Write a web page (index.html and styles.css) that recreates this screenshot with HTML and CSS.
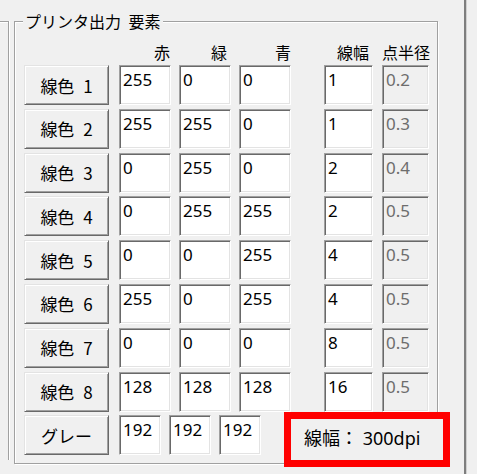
FILE: index.html
```html
<!DOCTYPE html>
<html lang="ja">
<head>
    <meta charset="UTF-8">
    <meta name="viewport" content="width=device-width, initial-scale=1.0">
    <title>プリンタ出力 要素</title>
    <link rel="stylesheet" href="styles.css">
</head>
<body>

<div class="window">
    <div class="side-group"></div>

    <fieldset class="group">
        <legend>プリンタ出力 要素</legend>

        <div class="head">
            <span class="h-btn"></span>
            <span class="h-col h-red">赤</span>
            <span class="h-col h-green">緑</span>
            <span class="h-col h-blue">青</span>
            <span class="h-col h-width">線幅</span>
            <span class="h-col h-dot">点半径</span>
        </div>

        <div class="rows">
            <div class="row">
                <button class="pen-btn">線色 1</button>
                <div class="edit c-red">255</div>
                <div class="edit c-green">0</div>
                <div class="edit c-blue">0</div>
                <div class="edit c-width">1</div>
                <div class="edit c-dot disabled">0.2</div>
            </div>
            <div class="row">
                <button class="pen-btn">線色 2</button>
                <div class="edit c-red">255</div>
                <div class="edit c-green">255</div>
                <div class="edit c-blue">0</div>
                <div class="edit c-width">1</div>
                <div class="edit c-dot disabled">0.3</div>
            </div>
            <div class="row">
                <button class="pen-btn">線色 3</button>
                <div class="edit c-red">0</div>
                <div class="edit c-green">255</div>
                <div class="edit c-blue">0</div>
                <div class="edit c-width">2</div>
                <div class="edit c-dot disabled">0.4</div>
            </div>
            <div class="row">
                <button class="pen-btn">線色 4</button>
                <div class="edit c-red">0</div>
                <div class="edit c-green">255</div>
                <div class="edit c-blue">255</div>
                <div class="edit c-width">2</div>
                <div class="edit c-dot disabled">0.5</div>
            </div>
            <div class="row">
                <button class="pen-btn">線色 5</button>
                <div class="edit c-red">0</div>
                <div class="edit c-green">0</div>
                <div class="edit c-blue">255</div>
                <div class="edit c-width">4</div>
                <div class="edit c-dot disabled">0.5</div>
            </div>
            <div class="row">
                <button class="pen-btn">線色 6</button>
                <div class="edit c-red">255</div>
                <div class="edit c-green">0</div>
                <div class="edit c-blue">255</div>
                <div class="edit c-width">4</div>
                <div class="edit c-dot disabled">0.5</div>
            </div>
            <div class="row">
                <button class="pen-btn">線色 7</button>
                <div class="edit c-red">0</div>
                <div class="edit c-green">0</div>
                <div class="edit c-blue">0</div>
                <div class="edit c-width">8</div>
                <div class="edit c-dot disabled">0.5</div>
            </div>
            <div class="row">
                <button class="pen-btn">線色 8</button>
                <div class="edit c-red">128</div>
                <div class="edit c-green">128</div>
                <div class="edit c-blue">128</div>
                <div class="edit c-width">16</div>
                <div class="edit c-dot disabled">0.5</div>
            </div>
            <div class="row">
                <button class="pen-btn">グレー</button>
                <div class="edit c-gray">192</div>
                <div class="edit c-gray">192</div>
                <div class="edit c-gray">192</div>
            </div>

            <!-- highlighted resolution label -->
            <div class="dpi-label">線幅： 300dpi</div>
        </div>
    </fieldset>

    <div class="frame-edge"></div>
</div>

</body>
</html>
```

FILE: styles.css
```css
body {
    margin: 0;
    width: 477px;
    height: 474px;
    overflow: hidden;
    background-color: #f0f0f0;
    font-family: "Noto Sans", "Noto Sans CJK JP", sans-serif;
    color: #000;
}
.window {
    display: flex;
    align-items: flex-start;
    height: 474px;
}

/* edge of the neighbouring group box */
.side-group {
    box-sizing: border-box;
    width: 9px;
    height: 439px;
    margin-top: 21px;
    border-top: 1px solid #a0a0a0;
    border-right: 1px solid #a0a0a0;
    box-shadow: inset 0 1px #fff, 1px 0 #fff;
}

.group {
    box-sizing: border-box;
    width: 424px;
    height: 455px;
    margin: 9px 0 0 5px;
    padding: 0 0 0 9px;
    min-width: 0;
    border: 1px solid #a0a0a0;
    box-shadow: inset 1px 1px #fff, 1px 1px #fff;
}
.group legend {
    margin-left: -1px;
    padding: 0 2px;
    font-family: "Noto Sans CJK JP", sans-serif;
    font-size: 16px;
    line-height: 25px;
    word-spacing: 4px;
    background-color: #f0f0f0;
}

.head {
    box-sizing: border-box;
    display: flex;
    height: 31px;
    padding-top: 7px;
    font-family: "Noto Sans CJK JP", sans-serif;
    font-size: 16px;
    line-height: 22px;
}
.h-btn { width: 95px; }
.h-col {
    text-align: right;
    white-space: nowrap;
}
.h-red { width: 51px; padding-right: 1px; }
.h-green { width: 48px; padding-right: 4px; margin-left: 8px; }
.h-blue { width: 52px; margin-left: 8px; }
.h-width { width: 45px; padding-right: 4px; margin-left: 33px; }
.h-dot { width: 47px; margin-left: 9px; }

.rows {
    position: relative;
    display: flex;
    flex-direction: column;
    gap: 3.8px;
}
.row {
    display: flex;
    height: 40px;
}

.pen-btn {
    box-sizing: border-box;
    width: 85px;
    height: 40px;
    margin: 0 10px 0 0;
    padding: 0;
    font-family: "Noto Sans CJK JP", sans-serif;
    font-size: 17px;
    word-spacing: 5px;
    color: #000;
    background-color: #f0f0f0;
    border: 1px solid;
    border-color: #e3e3e3 #696969 #696969 #e3e3e3;
    box-shadow: inset 1px 1px #fff, inset -1px -1px #a0a0a0;
}

.edit {
    box-sizing: border-box;
    height: 40px;
    padding: 2px 3px;
    font-size: 17px;
    background-color: #fff;
    border: 1px solid;
    border-color: #a0a0a0 #fff #fff #a0a0a0;
    box-shadow: inset 1px 1px #696969, inset -1px -1px #e3e3e3;
}
.edit.disabled {
    color: #6d6d6d;
    background-color: #f0f0f0;
}
.c-red { width: 52px; }
.c-green { width: 52px; margin-left: 8px; }
.c-blue { width: 52px; margin-left: 8px; }
.c-width { width: 49px; margin-left: 33px; }
.c-dot { width: 47px; margin-left: 9px; }
.c-gray { width: 42px; margin-right: 8px; }

.dpi-label {
    position: absolute;
    left: 260px;
    top: 347px;
    box-sizing: border-box;
    width: 166px;
    height: 55px;
    display: flex;
    align-items: center;
    padding: 0 0 6px 13px;
    border: 7px solid #ff0000;
    background-color: #f0f0f0;
    font-family: "Noto Sans", "Noto Sans CJK JP", sans-serif;
    font-size: 18px;
}

.frame-edge {
    width: 2px;
    height: 474px;
    margin-left: 26px;
    background-color: #7e7e7e;
    box-shadow: 1px 0 #d0d0d0;
}
```
